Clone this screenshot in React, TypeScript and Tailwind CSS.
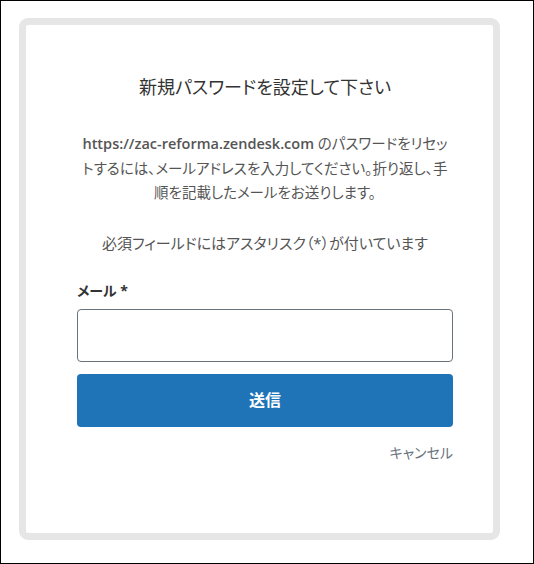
import React from "react";

const jp = "font-['Open_Sans','Noto_Sans_CJK_JP',sans-serif] [font-feature-settings:'palt']";

export default function App() {
  return (
    <div className={`w-[534px] h-[564px] border border-black bg-white ${jp}`}>
      <div className="ml-[18px] mt-[17px] w-[481px] h-[522px] rounded-[9px] border-[7px] border-[#e6e6e6] bg-white">
        <div className="pl-[51px] pr-[40px] pt-[50px] flex flex-col">
          <h1 className="text-center text-[18px] leading-[24px] text-[#333] whitespace-nowrap">
            新規パスワードを設定して下さい
          </h1>
          <p className="mt-[33px] text-center text-[14.5px] leading-[24.5px] text-[#555] whitespace-nowrap">
            <span className="font-semibold">https://zac-reforma.zendesk.com</span> のパスワードをリセッ
            <br />
            トするには、メールアドレスを入力してください。折り返し、手
            <br />
            順を記載したメールをお送りします。
          </p>
          <p className="mt-[25px] text-center text-[15px] leading-[24px] text-[#555] whitespace-nowrap">
            必須フィールドにはアスタリスク（*）が付いています
          </p>
          <label className="mt-[26px] text-[14px] leading-[20px] font-bold text-[#333]">
            メール *
          </label>
          <input
            type="email"
            className="mt-[8px] h-[53px] w-full rounded-[4px] border border-[#68737d] bg-white px-3 outline-none"
          />
          <button className="mt-[12px] h-[53px] w-full rounded-[4px] bg-[#1f73b7] text-[16px] font-bold text-white">
            送信
          </button>
          <div className="mt-[16px] text-right text-[14px] leading-[20px] text-[#68737d]">
            キャンセル
          </div>
        </div>
      </div>
    </div>
  );
}
